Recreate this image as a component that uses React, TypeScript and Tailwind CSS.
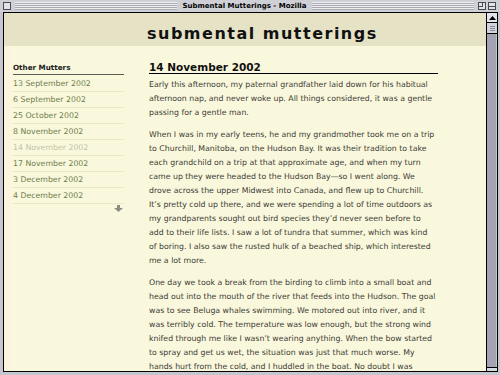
import React from 'react';

const mutters = [
  '13 September 2002',
  '6 September 2002',
  '25 October 2002',
  '8 November 2002',
  '14 November 2002',
  '17 November 2002',
  '3 December 2002',
  '4 December 2002',
];

const current = '14 November 2002';

const paragraphs: string[][] = [
  [
    'Early this afternoon, my paternal grandfather laid down for his habitual',
    'afternoon nap, and never woke up. All things considered, it was a gentle',
    'passing for a gentle man.',
  ],
  [
    'When I was in my early teens, he and my grandmother took me on a trip',
    'to Churchill, Manitoba, on the Hudson Bay. It was their tradition to take',
    'each grandchild on a trip at that approximate age, and when my turn',
    'came up they were headed to the Hudson Bay\u2014so I went along. We',
    'drove across the upper Midwest into Canada, and flew up to Churchill.',
    'It\u2019s pretty cold up there, and we were spending a lot of time outdoors as',
    'my grandparents sought out bird species they\u2019d never seen before to',
    'add to their life lists. I saw a lot of tundra that summer, which was kind',
    'of boring. I also saw the rusted hulk of a beached ship, which interested',
    'me a lot more.',
  ],
  [
    'One day we took a break from the birding to climb into a small boat and',
    'head out into the mouth of the river that feeds into the Hudson. The goal',
    'was to see Beluga whales swimming. We motored out into river, and it',
    'was terribly cold. The temperature was low enough, but the strong wind',
    'knifed through me like I wasn\u2019t wearing anything. When the bow started',
    'to spray and get us wet, the situation was just that much worse. My',
    'hands hurt from the cold, and I huddled in the boat. No doubt I was',
  ],
];

function TitleBar() {
  return (
    <div className="h-[12px] flex items-center pl-[3px] pr-[4px] bg-[#cfcfd6]">
      <div className="w-[8px] h-[8px] border border-[#4a4a52] bg-[#e2e2e8]" />
      <div className="flex-1 h-[8px] mx-[4px] flex items-center justify-center bg-[repeating-linear-gradient(to_bottom,#efeff3_0px,#efeff3_1px,#a9a9b3_1px,#a9a9b3_2px)]">
        <span className="bg-[#cfcfd6] px-[6px] text-[7px] leading-[12px] font-bold text-black font-['DejaVu_Sans',Verdana,sans-serif]">
          Submental Mutterings - Mozilla
        </span>
      </div>
      <div className="flex gap-[2px]">
        <div className="w-[8px] h-[8px] border border-[#4a4a52] bg-[#e2e2e8] relative">
          <div className="absolute left-0 top-0 w-[4px] h-[4px] border-r border-b border-[#4a4a52]" />
        </div>
        <div className="w-[8px] h-[8px] border border-[#4a4a52] bg-[#e2e2e8] flex flex-col justify-center">
          <div className="h-[1px] bg-[#4a4a52]" />
        </div>
      </div>
    </div>
  );
}

function Scrollbar() {
  return (
    <div className="w-[11px] border-l border-black bg-[#a3a3b3] flex flex-col">
      <div className="h-[10px] bg-[#e4e4ec] border-b border-black flex items-center justify-center">
        <svg width="7" height="4" viewBox="0 0 7 4">
          <path d="M3.5 0 L7 4 L0 4 Z" fill="#000" />
        </svg>
      </div>
      <div className="h-[11px] bg-[#d4d4de] border-b border-black flex flex-col items-center justify-center gap-[1px]">
        <div className="w-[5px] h-[1px] bg-[#8a8a98]" />
        <div className="w-[5px] h-[1px] bg-[#8a8a98]" />
        <div className="w-[5px] h-[1px] bg-[#8a8a98]" />
      </div>
      <div className="flex-1 border-r border-[#c4c4d0]" />
      <div className="h-[4px] border-t border-black bg-[#d8d8e0]" />
    </div>
  );
}

function Sidebar() {
  return (
    <div className="w-[120px] pl-[9px] pt-[16px] bg-[linear-gradient(to_right,#fcf2de_0px,#faf8dc_12px)]">
      <div className="h-[13px] leading-[12px] border-b border-[#5c5c52] text-[7.2px] font-bold text-[#222]">
        Other Mutters
      </div>
      <div className="mt-[1px]">
        {mutters.map((m) => (
          <div
            key={m}
            className={
              'h-[16px] flex items-center border-b border-[#ebe7c9] text-[7.8px] ' +
              (m === current ? 'text-[#c3c4a6]' : 'text-[#6f7e4e]')
            }
          >
            {m}
          </div>
        ))}
      </div>
      <div className="flex justify-end pr-[1px] mt-[1px]">
        <svg width="9" height="7" viewBox="0 0 9 7">
          <path d="M3 0 H6 V3 H9 L4.5 7 L0 3 H3 Z" fill="#8d8d86" />
        </svg>
      </div>
    </div>
  );
}

export default function App() {
  return (
    <div className="w-[500px] h-[375px] flex flex-col bg-[#c6c6ce] overflow-hidden font-['DejaVu_Sans',Verdana,sans-serif]">
      <TitleBar />
      <div className="flex-1 min-h-0 flex pl-[3px] pr-[2px] pb-[3px]">
        <div className="flex-1 min-h-0 flex border-t border-l border-r border-b border-black">
          <div className="flex-1 min-w-0 flex flex-col bg-[#faf8dc] overflow-hidden">
            <div className="h-[33px] shrink-0 bg-[#e5e2c6] pl-[143px] pt-[13px]">
              <div className="leading-[16px] text-[16px] font-bold tracking-[1.5px] text-[#111]">
                submental mutterings
              </div>
            </div>
            <div className="flex-1 min-h-0 flex">
              <Sidebar />
              <div className="flex-1 pl-[25px] pt-[16px]">
                <div className="w-[289px] h-[12px] leading-[11px] border-b border-black text-[10.5px] font-bold text-[#111]">
                  14 November 2002
                </div>
                <div className="mt-[4px]">
                  {paragraphs.map((p, i) => (
                    <p key={i} className="mb-[8px] text-[7.8px] leading-[14px] text-[#3a3a36] whitespace-nowrap">
                      {p.map((line, j) => (
                        <React.Fragment key={j}>
                          {line}
                          {j < p.length - 1 && <br />}
                        </React.Fragment>
                      ))}
                    </p>
                  ))}
                </div>
              </div>
            </div>
          </div>
          <Scrollbar />
        </div>
      </div>
    </div>
  );
}
